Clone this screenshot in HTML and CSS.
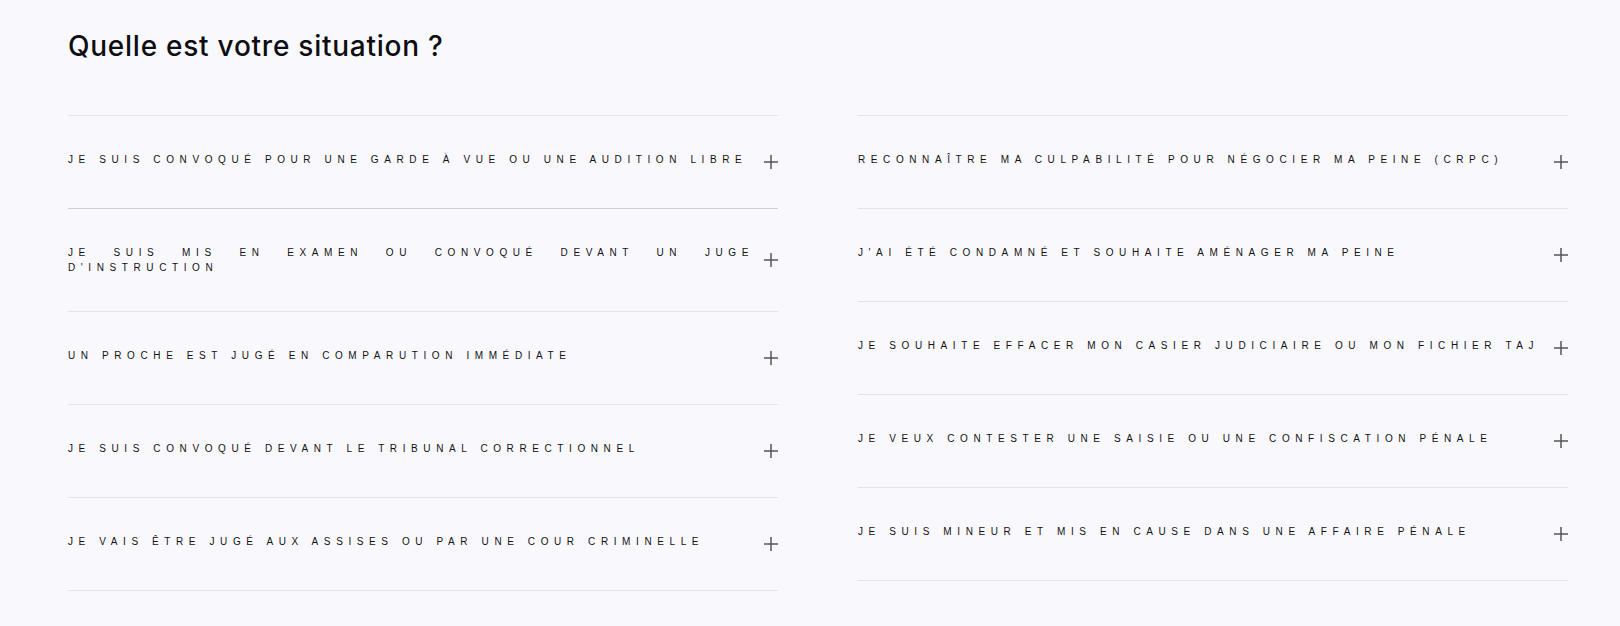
FILE: index.html
```html
<!DOCTYPE html>
<html lang="fr">
  <head>
    <meta charset="UTF-8" />
    <meta name="viewport" content="width=device-width, initial-scale=1.0" />
    <title>Quelle est votre situation ?</title>
    <link rel="stylesheet" href="styles.css">
  </head>
  <body>
    <section class="situations">
      <h1 class="situations-title">Quelle est votre situation ?</h1>
      <div class="faq-grid">
        <div class="faq-column">
          <div class="faq-item faq-item--active">
            <button class="faq-question">
              <span class="faq-label">Je suis convoqué pour une garde à vue ou une audition libre</span>
              <span class="faq-icon"><svg viewBox="0 0 14 14"><path d="M7 0v14M0 7h14"/></svg></span>
            </button>
          </div>
          <div class="faq-item">
            <button class="faq-question">
              <span class="faq-label">Je suis mis en examen ou convoqué devant un juge d'instruction</span>
              <span class="faq-icon"><svg viewBox="0 0 14 14"><path d="M7 0v14M0 7h14"/></svg></span>
            </button>
          </div>
          <div class="faq-item">
            <button class="faq-question">
              <span class="faq-label">Un proche est jugé en comparution immédiate</span>
              <span class="faq-icon"><svg viewBox="0 0 14 14"><path d="M7 0v14M0 7h14"/></svg></span>
            </button>
          </div>
          <div class="faq-item">
            <button class="faq-question">
              <span class="faq-label">Je suis convoqué devant le tribunal correctionnel</span>
              <span class="faq-icon"><svg viewBox="0 0 14 14"><path d="M7 0v14M0 7h14"/></svg></span>
            </button>
          </div>
          <div class="faq-item">
            <button class="faq-question">
              <span class="faq-label">Je vais être jugé aux assises ou par une cour criminelle</span>
              <span class="faq-icon"><svg viewBox="0 0 14 14"><path d="M7 0v14M0 7h14"/></svg></span>
            </button>
          </div>
        </div>
        <div class="faq-column">
          <div class="faq-item">
            <button class="faq-question">
              <span class="faq-label">Reconnaître ma culpabilité pour négocier ma peine (CRPC)</span>
              <span class="faq-icon"><svg viewBox="0 0 14 14"><path d="M7 0v14M0 7h14"/></svg></span>
            </button>
          </div>
          <div class="faq-item">
            <button class="faq-question">
              <span class="faq-label">J'ai été condamné et souhaite aménager ma peine</span>
              <span class="faq-icon"><svg viewBox="0 0 14 14"><path d="M7 0v14M0 7h14"/></svg></span>
            </button>
          </div>
          <div class="faq-item">
            <button class="faq-question">
              <span class="faq-label">Je souhaite effacer mon casier judiciaire ou mon fichier TAJ</span>
              <span class="faq-icon"><svg viewBox="0 0 14 14"><path d="M7 0v14M0 7h14"/></svg></span>
            </button>
          </div>
          <div class="faq-item">
            <button class="faq-question">
              <span class="faq-label">Je veux contester une saisie ou une confiscation pénale</span>
              <span class="faq-icon"><svg viewBox="0 0 14 14"><path d="M7 0v14M0 7h14"/></svg></span>
            </button>
          </div>
          <div class="faq-item">
            <button class="faq-question">
              <span class="faq-label">Je suis mineur et mis en cause dans une affaire pénale</span>
              <span class="faq-icon"><svg viewBox="0 0 14 14"><path d="M7 0v14M0 7h14"/></svg></span>
            </button>
          </div>
        </div>
      </div>
    </section>
  </body>
</html>
```

FILE: styles.css
```css
body {
  margin: 0;
  background: #f9f9fd;
  color: #111;
  font-family: "Liberation Sans", Arial, sans-serif;
}
.situations {
  padding: 29px 52px 0 68px;
}
.situations-title {
  margin: 0 0 52px;
  font-family: Inter, "Liberation Sans", sans-serif;
  font-size: 28px;
  font-weight: 500;
  line-height: 34px;
  letter-spacing: 0.75px;
  color: #0d0d12;
}
.faq-grid {
  display: grid;
  grid-template-columns: 1fr 1fr;
  column-gap: 80px;
}
.faq-column {
  border-top: 1px solid #e2e2e8;
}
.faq-item {
  border-bottom: 1px solid #e2e2e8;
}
.faq-item--active {
  border-bottom-color: #cfcfd6;
}
.faq-question {
  display: flex;
  gap: 10px;
  width: 100%;
  padding: 36px 0;
  margin: 0;
  border: none;
  background: none;
  color: inherit;
  font: inherit;
  text-align: left;
  cursor: pointer;
}
.faq-label {
  flex: 1;
  font-size: 10px;
  line-height: 15px;
  letter-spacing: 0.56em;
  text-transform: uppercase;
  text-align: justify;
}
.faq-icon {
  display: flex;
  align-items: center;
  width: 14px;
  min-height: 20px;
}
.faq-icon svg {
  width: 14px;
  height: 14px;
  fill: none;
  stroke: #555;
  stroke-width: 1.5;
}
```
